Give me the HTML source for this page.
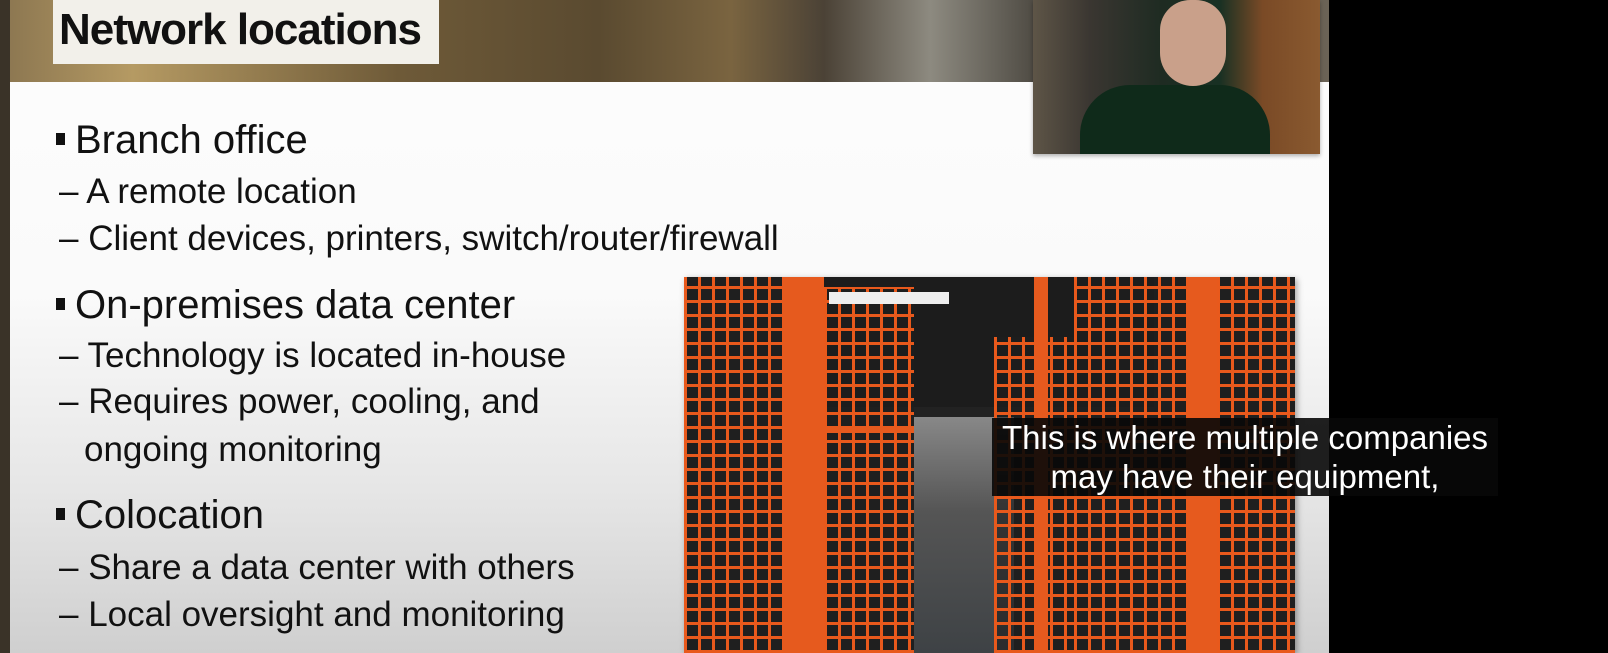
<!DOCTYPE html>
<html><head><meta charset="utf-8"><style>
*{margin:0;padding:0;box-sizing:border-box}
html,body{width:1608px;height:653px;overflow:hidden;background:#000}
.slide{position:absolute;left:10px;top:0;width:1319px;height:653px;background:linear-gradient(180deg,#fdfdfd 0%,#fafafa 45%,#e6e6e6 75%,#cfcfcf 100%)}
.banner{position:absolute;left:0;top:0;width:1329px;height:82px;background:linear-gradient(90deg,#8a7550 0%,#b59a63 10%,#6e5a38 30%,#5a4a30 45%,#7a6440 55%,#4b4236 62%,#8d8a80 70%,#3e3a33 80%,#6b6356 100%)}
.lstrip{position:absolute;left:0;top:0;width:10px;height:653px;background:#3a3328}
.title{position:absolute;left:53px;top:0;width:386px;height:64px;background:#f2f0ea;font:bold 44px "Liberation Sans",sans-serif;color:#111;padding:5px 0 0 6px;letter-spacing:-1px;white-space:nowrap}
.cam{position:absolute;left:1033px;top:0;width:287px;height:154px;background:linear-gradient(90deg,#5e5547 0%,#3a3631 20%,#1e2b22 45%,#183023 65%,#7a4a26 80%,#8a5a30 100%);box-shadow:0 2px 4px rgba(0,0,0,.3)}
.head{position:absolute;left:1160px;top:0;width:66px;height:86px;border-radius:33px 33px 36px 36px;background:#c9a08a}
.body{position:absolute;left:1080px;top:85px;width:190px;height:69px;border-radius:50px 50px 0 0;background:#0f2a1a}
.txt{position:absolute;font-family:"Liberation Sans",sans-serif;color:#111;white-space:nowrap}
.b{font-size:40px}
.s{font-size:35px}
.blt{display:inline-block;width:9px;height:12px;background:#111;margin-right:10px;vertical-align:8px}
.photo{position:absolute;left:684px;top:277px;width:611px;height:376px;background:#222;overflow:hidden;box-shadow:2px 2px 6px rgba(0,0,0,.35)}
.cage{position:absolute;background-color:rgba(30,30,30,.6);background-image:repeating-linear-gradient(90deg,#e8591c 0 3px,transparent 3px 14px),repeating-linear-gradient(0deg,#e8591c 0 3px,transparent 3px 14px)}
.post{position:absolute;background:#e65a1e}
.cap{position:absolute;left:992px;top:418px;width:506px;height:78px;background:rgba(8,8,8,.9);color:#fff;font:33px/39px "Liberation Sans",sans-serif;text-align:center;padding-top:0;white-space:nowrap}
</style></head><body>
<div class="slide"></div>
<div class="banner"></div>
<div class="lstrip"></div>
<div class="title">Network locations</div>
<div class="cam"></div>
<div class="body"></div>
<div class="head"></div>

<div class="txt b" style="left:56px;top:118px"><span class="blt"></span>Branch office</div>
<div class="txt s" style="left:59px;top:172px">– A remote location</div>
<div class="txt s" style="left:59px;top:219px">– Client devices, printers, switch/router/firewall</div>
<div class="txt b" style="left:56px;top:283px"><span class="blt"></span>On-premises data center</div>
<div class="txt s" style="left:59px;top:336px">– Technology is located in-house</div>
<div class="txt s" style="left:59px;top:382px">– Requires power, cooling, and</div>
<div class="txt s" style="left:84px;top:430px">ongoing monitoring</div>
<div class="txt b" style="left:56px;top:493px"><span class="blt"></span>Colocation</div>
<div class="txt s" style="left:59px;top:548px">– Share a data center with others</div>
<div class="txt s" style="left:59px;top:595px">– Local oversight and monitoring</div>

<div class="photo">
  <div style="position:absolute;left:140px;top:0;width:330px;height:130px;background:#1c1c1c"></div>
  <div style="position:absolute;left:230px;top:140px;width:100px;height:236px;background:linear-gradient(180deg,#888 0%,#555 40%,#3e4245 100%)"></div>
  <div class="cage" style="left:0;top:0;width:100px;height:376px"></div>
  <div class="post" style="left:100px;top:0;width:40px;height:376px"></div>
  <div class="cage" style="left:140px;top:10px;width:90px;height:366px"></div>
  <div class="post" style="left:140px;top:150px;width:90px;height:6px"></div>
  <div style="position:absolute;left:145px;top:15px;width:120px;height:12px;background:#eee"></div>
  <div class="cage" style="left:310px;top:60px;width:80px;height:316px"></div>
  <div class="cage" style="left:390px;top:0;width:120px;height:376px"></div>
  <div class="post" style="left:350px;top:0;width:14px;height:376px"></div>
  <div class="post" style="left:505px;top:0;width:28px;height:376px"></div>
  <div class="cage" style="left:533px;top:0;width:78px;height:376px"></div>
</div>
<div class="cap">This is where multiple companies<br>may have their equipment,</div>
</body></html>
